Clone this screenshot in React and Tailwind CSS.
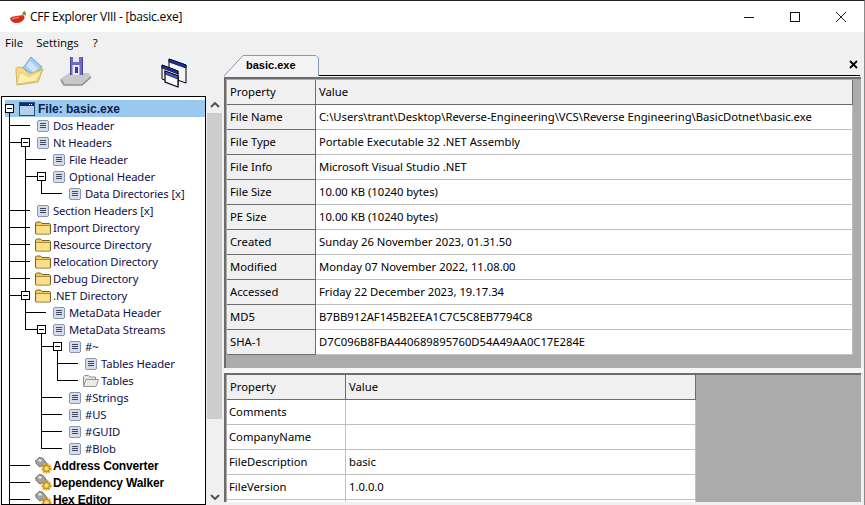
import React from 'react';

const tree = [
  { label: 'Dos Header', icon: 'doc', pad: 'pl-[33px]' },
  { label: 'Nt Headers', icon: 'doc', pad: 'pl-[33px]' },
  { label: 'File Header', icon: 'doc', pad: 'pl-[49px]' },
  { label: 'Optional Header', icon: 'doc', pad: 'pl-[49px]' },
  { label: 'Data Directories [x]', icon: 'doc', pad: 'pl-[65px]' },
  { label: 'Section Headers [x]', icon: 'doc', pad: 'pl-[33px]' },
  { label: 'Import Directory', icon: 'folder', pad: 'pl-[33px]' },
  { label: 'Resource Directory', icon: 'folder', pad: 'pl-[33px]' },
  { label: 'Relocation Directory', icon: 'folder', pad: 'pl-[33px]' },
  { label: 'Debug Directory', icon: 'folder', pad: 'pl-[33px]' },
  { label: '.NET Directory', icon: 'folder', pad: 'pl-[33px]' },
  { label: 'MetaData Header', icon: 'doc', pad: 'pl-[49px]' },
  { label: 'MetaData Streams', icon: 'doc', pad: 'pl-[49px]' },
  { label: '#~', icon: 'doc', pad: 'pl-[65px]' },
  { label: 'Tables Header', icon: 'doc', pad: 'pl-[81px]' },
  { label: 'Tables', icon: 'open', pad: 'pl-[81px]' },
  { label: '#Strings', icon: 'doc', pad: 'pl-[65px]' },
  { label: '#US', icon: 'doc', pad: 'pl-[65px]' },
  { label: '#GUID', icon: 'doc', pad: 'pl-[65px]' },
  { label: '#Blob', icon: 'doc', pad: 'pl-[65px]' },
  { label: 'Address Converter', icon: 'gear', pad: 'pl-[33px]', bold: true },
  { label: 'Dependency Walker', icon: 'gear', pad: 'pl-[33px]', bold: true },
  { label: 'Hex Editor', icon: 'gear', pad: 'pl-[33px]', bold: true },
];

const fileInfo = [
  ['File Name', 'C:\\Users\\trant\\Desktop\\Reverse-Engineering\\VCS\\Reverse Engineering\\BasicDotnet\\basic.exe'],
  ['File Type', 'Portable Executable 32 .NET Assembly'],
  ['File Info', 'Microsoft Visual Studio .NET'],
  ['File Size', '10.00 KB (10240 bytes)'],
  ['PE Size', '10.00 KB (10240 bytes)'],
  ['Created', 'Sunday 26 November 2023, 01.31.50'],
  ['Modified', 'Monday 07 November 2022, 11.08.00'],
  ['Accessed', 'Friday 22 December 2023, 19.17.34'],
  ['MD5', 'B7BB912AF145B2EEA1C7C5C8EB7794C8'],
  ['SHA-1', 'D7C096B8FBA440689895760D54A49AA0C17E284E'],
];

const versionInfo = [
  ['Comments', ''],
  ['CompanyName', ''],
  ['FileDescription', 'basic'],
  ['FileVersion', '1.0.0.0'],
  ['', ''],
];

const DocIcon = () => (
  <svg width="12" height="12" viewBox="0 0 12 12" className="ml-[2px]" shapeRendering="crispEdges">
    <rect x="0.5" y="0.5" width="11" height="11" rx="2" fill="#d5dbe8" stroke="#8a97ae" />
    <path d="M3 3.500h6M3 5.500h6M3 7.500h6" stroke="#3c4a64" strokeWidth="1" />
  </svg>
);

const FolderIcon = () => (
  <svg width="16" height="14" viewBox="0 0 16 14">
    <path d="M0.5 12.500V2l1-1h4l1.500 1.500h7.500l1 1v9l-1 .5h-13.500z" fill="#f3c95e" stroke="#7d6420" />
    <path d="M1.500 5h13v7.500h-13z" fill="#fae08a" />
    <path d="M1 4.500h14" stroke="#a58a3e" />
  </svg>
);

const OpenFolderIcon = () => (
  <svg width="16" height="14" viewBox="0 0 16 14">
    <path d="M0.5 12V2.500l1-1h4l1.500 1.500h5.500v2" fill="#e4e4df" stroke="#96968f" />
    <path d="M0.5 12.500l2.500-7h12.500l-2.500 7z" fill="#ecece7" stroke="#96968f" />
  </svg>
);

const GearIcon = () => (
  <svg width="18" height="17" viewBox="0 0 18 17" className="shrink-0">
    <path d="M0.500 4l3.500-3.500 3.500.5 2.500 3 3 4-2 3-4-2.500-2 1.500-3.500-3z" fill="#a2a2a2" stroke="#555" strokeWidth="0.800" />
    <path d="M3 3l2-1.200 2 1.700-2 1.700z" fill="#e4e4e4" />
    <circle cx="11.500" cy="11.500" r="3.800" fill="none" stroke="#dfa51a" strokeWidth="2.800" strokeDasharray="1.700 0.800" />
    <circle cx="11.500" cy="11.500" r="3.200" fill="#f5c93f" stroke="#96690c" strokeWidth="0.700" />
    <circle cx="11.500" cy="11.500" r="1" fill="#fff4c4" />
  </svg>
);

const icons = { doc: DocIcon, folder: FolderIcon, open: OpenFolderIcon, gear: GearIcon };

// connector lines and +/- boxes, in page coordinates
const TreeLines = () => {
  const boxes = [[9, 108], [25, 142], [41, 176], [25, 295], [41, 329], [57, 346]];
  return (
    <svg className="absolute left-0 top-0" width="203" height="408" viewBox="2 97 203 408" shapeRendering="crispEdges">
      <path
        d="M9.5 108V505M9 125.5H30M9 142.5H21M9 210.5H30M9 227.5H30M9 244.5H30M9 261.5H30M9 278.5H30M9 295.5H21M9 465.5H30M9 482.5H30M9 499.5H30
           M25.5 142V330M25 159.5H46M25 176.5H37M25 312.5H46M25 329.5H37
           M41.5 176V194M41 193.5H62
           M41.5 329V448M41 346.5H53M41 397.5H62M41 414.5H62M41 431.5H62M41 448.5H62
           M57.5 346V381M57 363.5H78M57 380.5H78"
        stroke="#000"
        fill="none"
      />
      {boxes.map(([x, y]) => (
        <g key={`${x}-${y}`}>
          <rect x={x - 3.5} y={y - 3.5} width="8" height="8" fill="#fff" stroke="#000" />
          <path d={`M${x - 2} ${y + 0.5}H${x + 3}`} stroke="#000" />
        </g>
      ))}
    </svg>
  );
};

const Chevron = ({ d }) => (
  <svg width="10" height="6" viewBox="0 0 10 6">
    <path d={d} fill="none" stroke="#555" strokeWidth="2" />
  </svg>
);

const Grid = ({ rows, col1, col2, header }) => (
  <div className="flex flex-col">
    <div className="flex h-[25px]">
      <div className={`${col1} bg-[#f0f0f0] border-b border-r border-[#6d6d6d] pl-[3px] flex items-center`}>Property</div>
      <div className={`${col2} bg-[#f0f0f0] border-b border-r border-[#6d6d6d] pl-[3px] flex items-center`}>Value</div>
    </div>
    {rows.map(([name, value], i) => (
      <div key={i} className="flex h-[25px]">
        <div
          className={
            header
              ? `${col1} bg-[#f0f0f0] border-b border-r border-[#6d6d6d] pl-[3px] flex items-center`
              : `${col1} bg-white border-b border-r border-[#c0c0c0] pl-[2px] flex items-center`
          }
        >
          {name}
        </div>
        <div className={`${col2} bg-white border-b border-r border-[#c0c0c0] pl-[3px] flex items-center whitespace-nowrap`}>
          {value}
        </div>
      </div>
    ))}
  </div>
);

export default function App() {
  return (
    <div className="w-[865px] h-[505px] overflow-hidden flex flex-col bg-[#f0f0f0] border-t border-[#222] border-r border-r-[#8a8a8a] text-black font-['Noto_Sans',sans-serif] text-[11.25px] leading-none">
      {/* Title bar */}
      <div className="h-[31px] bg-white flex items-center shrink-0">
        <svg width="18" height="14" viewBox="0 0 18 14" className="ml-[9px]">
          <path d="M1 8c3-2 7-2 10-2.500 2-.5 4-.5 4.500 1 .5 3-3 6-7 6.500-4 .5-7-2-7.500-5z" fill="#d62a1c" />
          <path d="M3 9c2-1 5-1 7-2" stroke="#f2908a" strokeWidth="1.200" fill="none" />
          <path d="M13 5c.5-2 1-3.500 2.500-4 1.500 1 2 3 1 5-.5-1-2-1.500-3.500-1z" fill="#6f8f3a" />
        </svg>
        <span className="ml-[3px] text-[12px] font-['Open_Sans',sans-serif] tracking-[-0.25px]">CFF Explorer VIII - [basic.exe]</span>
        <div className="ml-auto flex">
          <div className="w-[46px] h-[31px] flex items-center justify-center">
            <svg width="10" height="10" viewBox="0 0 10 10" shapeRendering="crispEdges"><path d="M0 5.500H10" stroke="#111" /></svg>
          </div>
          <div className="w-[46px] h-[31px] flex items-center justify-center">
            <svg width="10" height="10" viewBox="0 0 10 10" shapeRendering="crispEdges"><rect x="0.500" y="0.500" width="9" height="9" fill="none" stroke="#111" /></svg>
          </div>
          <div className="w-[46px] h-[31px] flex items-center justify-center">
            <svg width="10" height="10" viewBox="0 0 10 10"><path d="M0 0L10 10M10 0L0 10" stroke="#222" strokeWidth="1" /></svg>
          </div>
        </div>
      </div>

      {/* Menu */}
      <div className="h-[20px] shrink-0 flex items-center pl-[5px] pt-[1px] gap-[13px] font-['Open_Sans',sans-serif] text-[11.500px]">
        <span>File</span>
        <span>Settings</span>
        <span className="ml-[1px]">?</span>
      </div>

      <div className="flex flex-1 min-h-0">
        {/* Left column */}
        <div className="w-[224px] shrink-0 flex flex-col">
          <div className="h-[44px] shrink-0 flex items-start pt-[4px] pl-[15px]">
            <svg width="30" height="31" viewBox="0 0 30 31">
              <path d="M16 1l11 10-7 9-12-8z" fill="#a6cdf0" stroke="#5f96cf" strokeWidth="0.800" />
              <path d="M15 5l8 7-4 5-8-7z" fill="#cfe3f6" />
              <path d="M1 14c0-2 1-3 3-3l4 1 6 6 14-5-5 13-21 3z" fill="#f8dc82" stroke="#c6a646" strokeWidth="0.800" />
              <path d="M2 28l3-12 9 5 13-7-6 11z" fill="#fdeeb4" stroke="#d9b95a" strokeWidth="0.600" />
            </svg>
            <svg width="33" height="31" viewBox="0 0 33 31" className="ml-[14px]">
              <path d="M1 23l9-6h20l2 4-9 8H5z" fill="#c8c8c8" />
              <path d="M2 24l3 5h18l9-8" fill="none" stroke="#8e8e8e" strokeWidth="1.500" />
              <path d="M11 1h12v18h-12z" fill="#6c6cb8" />
              <path d="M14 1h6v5h-6zM13.500 9h7v10h-7z" fill="#e7e7f5" />
              <path d="M16 11h3v6h-3z" fill="#3b3b90" />
              <path d="M11 1h1v18h-1zM23 1h1v18h-1z" fill="#44449a" />
            </svg>
            <svg width="30" height="33" viewBox="0 0 30 33" className="ml-[67px]">
              <rect x="0" y="0" width="30" height="33" fill="#eef1f6" />
              <path d="M10 3l17 6v18l-17-6z" fill="#f4f4f4" stroke="#000" />
              <path d="M10 3l17 6v3l-17-6z" fill="#1c2fb0" stroke="#000" strokeWidth="0.700" />
              <path d="M3 9l16 6v14l-16-6z" fill="#f4f4f4" stroke="#000" />
              <path d="M3 9l16 6v3l-16-6z" fill="#1c2fb0" stroke="#000" strokeWidth="0.700" />
              <path d="M6 15l13 5v11l-13-5z" fill="#fafafa" stroke="#000" strokeWidth="1.200" />
              <path d="M6 15l13 5v3l-13-5z" fill="#4a5ad0" stroke="#000" strokeWidth="0.700" />
            </svg>
          </div>
          <div className="flex flex-1 min-h-0">
            <div className="ml-px w-[205px] shrink-0 border border-black bg-white flex flex-col overflow-hidden">
              <div className="relative flex-1 pt-[3px] text-[#10104a]">
                <div className="absolute left-[3px] right-0 top-[3px] h-[17px] bg-[#99c9ef]" />
                <TreeLines />
                <div className="relative h-[17px] flex items-center pl-[17px] font-['Liberation_Sans',sans-serif] text-[12px] font-bold text-[#0c2050]">
                  <svg width="16" height="14" viewBox="0 0 16 14">
                    <rect x="0.500" y="0.500" width="15" height="13" fill="#b4d0ea" stroke="#1f4f80" />
                    <rect x="1" y="1" width="14" height="3" fill="#0b2a80" />
                    <path d="M10 2.500h4" stroke="#fff" strokeDasharray="1 1" />
                  </svg>
                  <span className="ml-[3px]">File: basic.exe</span>
                </div>
                {tree.map((item) => {
                  const Icon = icons[item.icon];
                  return (
                    <div
                      key={item.label}
                      className={`relative h-[17px] flex items-center ${item.pad} ${item.bold ? "font-['Liberation_Sans',sans-serif] text-[12px] tracking-[-0.15px] font-bold text-black" : 'tracking-[-0.1px]'}`}
                    >
                      <div className="w-[16px] h-[17px] flex items-center shrink-0"><Icon /></div>
                      <span className="whitespace-nowrap ml-[2px]">{item.label}</span>
                    </div>
                  );
                })}
              </div>
            </div>
            {/* Tree scrollbar */}
            <div className="ml-px w-[15px] shrink-0 flex flex-col mt-px">
              <div className="h-[16px] flex items-center justify-center"><Chevron d="M1 5l4-4 4 4" /></div>
              <div className="h-[306px] bg-[#cdcdcd]" />
              <div className="flex-1" />
              <div className="h-[16px] flex items-center justify-center"><Chevron d="M1 1l4 4 4-4" /></div>
            </div>
          </div>
        </div>

        {/* Right column */}
        <div className="flex-1 min-w-0 flex flex-col">
          <div className="h-[24px] shrink-0 flex items-end mr-[4px]">
            <div className="relative w-[95px] h-[21px] shrink-0 flex items-center pl-[22px] font-bold text-[11px] font-['Liberation_Sans',sans-serif]">
              <svg className="absolute left-0 top-0" width="95" height="21" viewBox="0 0 95 21">
                <path d="M0 21L19 0.500H92l2.500 2.500V21" fill="#f4f4f4" stroke="#7f9db9" />
              </svg>
              <span className="relative">basic.exe</span>
            </div>
            <div className="flex-1 h-full border-b border-black flex items-end justify-end pr-[2px] pb-[6px]">
              <svg width="9" height="9" viewBox="0 0 9 9">
                <path d="M1 1l7 7M8 1L1 8" stroke="#000" strokeWidth="1.800" />
              </svg>
            </div>
          </div>

          <div className="h-[291px] shrink-0 mt-px mr-[3px] border-t-2 border-l-2 border-[#6d6d6d] bg-[#ababab] pt-px pl-px overflow-hidden">
            <Grid rows={fileInfo} col1="w-[89px]" col2="w-[537px]" header />
          </div>
          <div className="h-[5px] shrink-0 bg-[#f6f6f6]" />
          <div className="h-[129px] shrink-0 mr-[3px] border-t-2 border-l-2 border-[#6d6d6d] bg-[#ababab] pl-px overflow-hidden">
            <Grid rows={versionInfo} col1="w-[119px]" col2="w-[350px]" />
          </div>
        </div>
      </div>
    </div>
  );
}
